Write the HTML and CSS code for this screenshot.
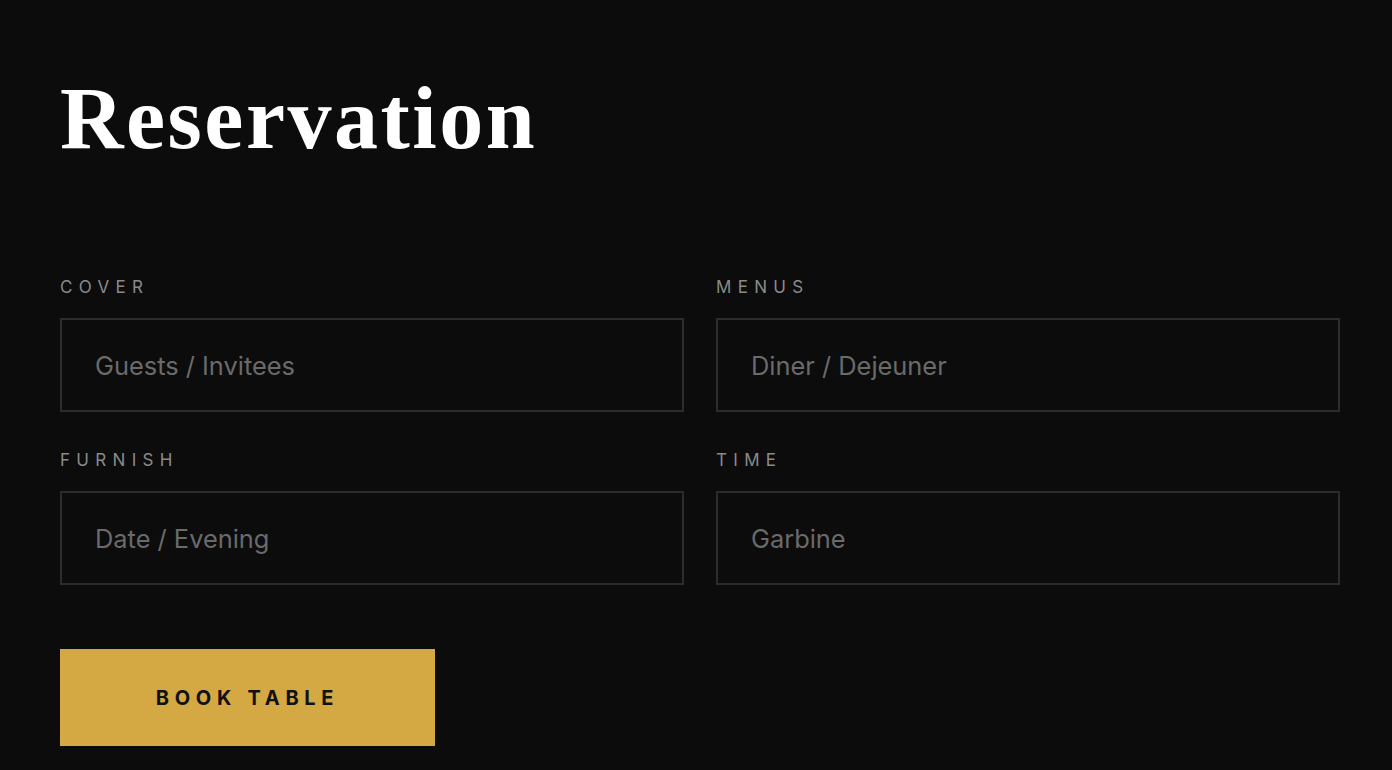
FILE: index.html
```html
<!DOCTYPE html>
<html lang="en">
  <head>
    <meta charset="UTF-8" />
    <meta name="viewport" content="width=device-width, initial-scale=1.0" />
    <title>Reservation</title>
    <link rel="stylesheet" href="styles.css">
  </head>
  <body>
    <div class="container">
      <h1 class="title">Reservation</h1>
      <form class="form">
        <div class="grid">
          <div class="field">
            <label for="cover">Cover</label>
            <input type="text" id="cover" placeholder="Guests / Invitees" />
          </div>
          <div class="field">
            <label for="menus">Menus</label>
            <input type="text" id="menus" placeholder="Diner / Dejeuner" />
          </div>
          <div class="field">
            <label for="furnish">Furnish</label>
            <input type="text" id="furnish" placeholder="Date / Evening" />
          </div>
          <div class="field">
            <label for="time">Time</label>
            <input type="text" id="time" placeholder="Garbine" />
          </div>
        </div>
        <button type="button" class="btn">Book Table</button>
      </form>
    </div>
  </body>
</html>
```

FILE: styles.css
```css
body {
  margin: 0;
  padding: 0;
  background-color: #0c0c0c;
  font-family: Inter, "Noto Sans", sans-serif;
}

.container {
  width: 1280px;
  padding: 64px 60px 0;
}

.title {
  margin: 0;
  font-family: "Liberation Serif", serif;
  font-weight: bold;
  font-size: 88px;
  line-height: 110px;
  letter-spacing: 2.5px;
  color: #fff;
}

.form {
  margin-top: 103px;
}

.grid {
  display: grid;
  grid-template-columns: 1fr 1fr;
  column-gap: 32px;
  row-gap: 38px;
}

.field label {
  display: block;
  font-size: 17px;
  line-height: 20px;
  letter-spacing: 6.3px;
  text-transform: uppercase;
  color: #8a8a8a;
  margin-bottom: 21px;
}

.field input {
  display: block;
  box-sizing: border-box;
  width: 100%;
  height: 94px;
  padding: 0 33px;
  background-color: #0c0c0c;
  border: 2px solid #2c2c2c;
  border-radius: 0;
  font-family: Inter, "Noto Sans", sans-serif;
  font-size: 25.4px;
  color: #ccc;
  outline: none;
}

.field input::placeholder {
  color: #6a6a6a;
}

.btn {
  display: block;
  margin-top: 64px;
  width: 375px;
  height: 97px;
  border: none;
  border-radius: 0;
  background-color: #d4a843;
  color: #111;
  font-family: Inter, "Noto Sans", sans-serif;
  font-weight: bold;
  font-size: 20px;
  letter-spacing: 5.7px;
  text-transform: uppercase;
  cursor: pointer;
}
```
